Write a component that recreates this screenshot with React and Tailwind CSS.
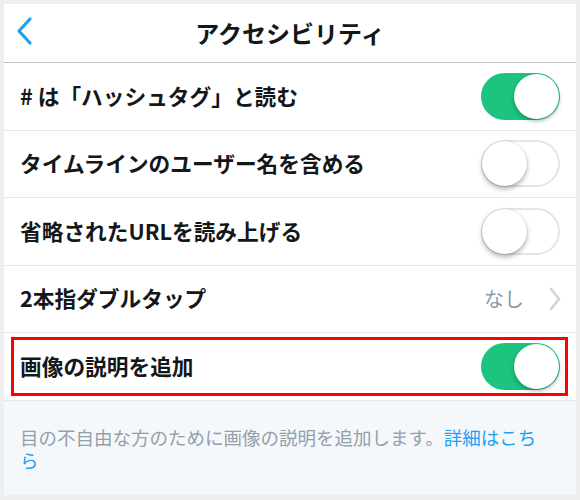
import React from "react";

const font = { fontFamily: '"Noto Sans CJK JP", "Noto Sans", sans-serif' };

function Toggle({ on }) {
  return on ? (
    <div className="relative w-[79px] h-[47px] rounded-full bg-[#1cc47e] shrink-0">
      <div className="absolute right-[1px] top-[1px] w-[45px] h-[45px] rounded-full bg-white shadow-[0_2px_4px_rgba(0,0,0,0.3)]"></div>
    </div>
  ) : (
    <div className="relative w-[79px] h-[47px] rounded-full bg-white border-2 border-[#e5e5e5] shrink-0">
      <div className="absolute left-[-1px] top-[-1px] w-[45px] h-[45px] rounded-full bg-white shadow-[0_3px_5px_rgba(0,0,0,0.3),0_0_1px_rgba(0,0,0,0.25)]"></div>
    </div>
  );
}

function Row({ label, children, highlight }) {
  return (
    <div className="relative flex items-center justify-between h-[67.5px] pl-4 pr-4 border-b border-[#e1e8ed] bg-white">
      <span className="text-[21.7px] font-bold text-[#14171a]">{label}</span>
      {children}
      {highlight && (
        <div className="absolute left-[7px] right-[8px] top-[4px] bottom-[4px] border-[3px] border-[#ff0000] pointer-events-none"></div>
      )}
    </div>
  );
}

export default function App() {
  return (
    <div className="w-[580px] h-[500px] bg-[#eeeeee] pt-[4px] px-[4px] pb-[5px]" style={font}>
      <div className="h-full flex flex-col bg-white">
        <div className="relative flex items-center justify-center h-[59px] border-b border-[#b9c3cc]">
          <svg className="absolute left-[10px] top-[12px]" width="20" height="30" viewBox="0 0 20 30">
            <path d="M16 3 L5 15 L16 27" fill="none" stroke="#1da1f2" strokeWidth="3.2" strokeLinecap="round" strokeLinejoin="round" />
          </svg>
          <span className="text-[24px] font-bold text-[#14171a]">アクセシビリティ</span>
        </div>
        <Row label="# は「ハッシュタグ」と読む">
          <Toggle on />
        </Row>
        <Row label="タイムラインのユーザー名を含める">
          <Toggle />
        </Row>
        <Row label="省略されたURLを読み上げる">
          <Toggle />
        </Row>
        <Row label="2本指ダブルタップ">
          <div className="flex items-center gap-[25px] mr-[-1px]">
            <span className="text-[20px] text-[#8899a6]">なし</span>
            <svg width="12" height="24" viewBox="0 0 12 24">
              <path d="M2 2 L10 12 L2 22" fill="none" stroke="#ccd6dd" strokeWidth="2.6" strokeLinecap="round" strokeLinejoin="round" />
            </svg>
          </div>
        </Row>
        <Row label="画像の説明を追加" highlight>
          <Toggle on />
        </Row>
        <div className="flex-1 bg-[#f5f8fa] pl-4 pr-6 pt-[25px]">
          <p className="text-[18.5px] leading-[23px] text-[#939fab]">
            目の不自由な方のために画像の説明を追加します。<span className="text-[#1da1f2]">詳細はこちら</span>
          </p>
        </div>
      </div>
    </div>
  );
}
